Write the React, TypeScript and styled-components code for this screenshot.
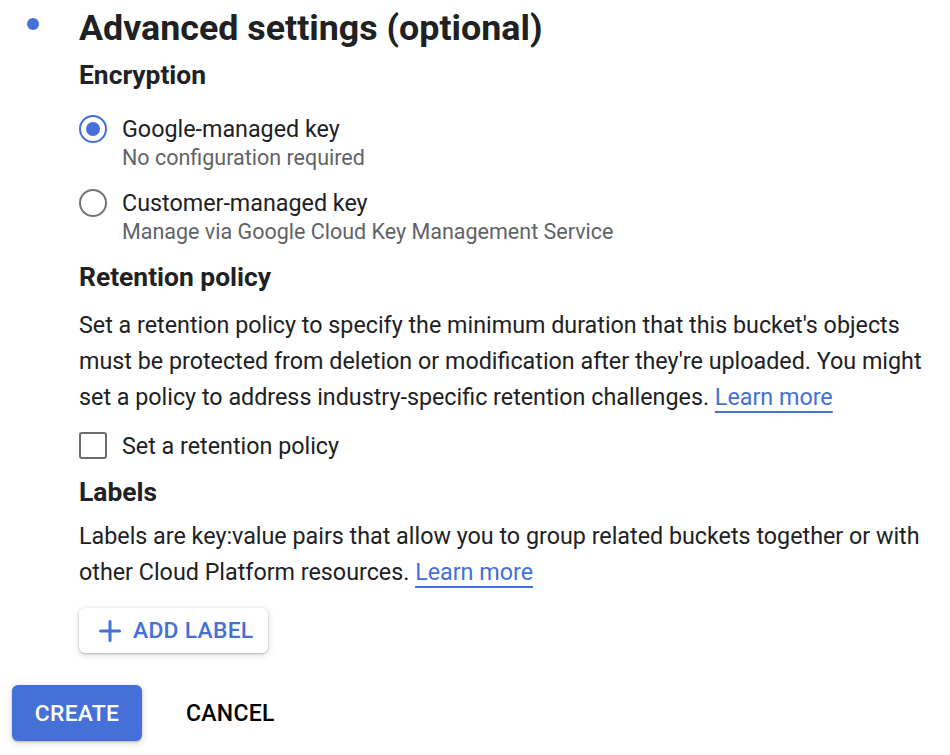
import React from "react";
import styled, { createGlobalStyle } from "styled-components";

const BLUE = "#4470d8";
const TEXT = "#202124";
const MUTED = "#5f6368";

const Global = createGlobalStyle`
  html, body { margin: 0; padding: 0; background: #ffffff; }
  body { font-family: Roboto, "Noto Sans", "Liberation Sans", sans-serif; color: ${TEXT}; }
  * { box-sizing: border-box; }
`;

const Page = styled.div`
  width: 950px;
  height: 755px;
  padding: 7px 0 0 12px;
  overflow: hidden;
`;

const Step = styled.section`
  display: flex;
`;

const Rail = styled.div`
  width: 67px;
  flex: none;
  padding: 11px 0 0 15px;
`;

const Dot = styled.span`
  display: block;
  width: 12px;
  height: 12px;
  border-radius: 50%;
  background: ${BLUE};
`;

const Content = styled.div`
  display: flex;
  flex-direction: column;
  flex: 1;
`;

const Title = styled.h1`
  margin: 0;
  font-size: 35.8px;
  line-height: 42px;
  font-weight: 700;
`;

const Heading = styled.h2<{ $gap: number }>`
  margin: ${(p) => p.$gap}px 0 0;
  font-size: 26.4px;
  line-height: 32px;
  font-weight: 700;
`;

const OptionList = styled.div`
  display: flex;
  flex-direction: column;
  gap: 16px;
  margin-top: 23px;
`;

const Option = styled.label`
  display: flex;
  align-items: flex-start;
  gap: 15px;
`;

const Radio = styled.span<{ $checked?: boolean }>`
  width: 28px;
  height: 28px;
  flex: none;
  border-radius: 50%;
  border: 2px solid ${(p) => (p.$checked ? BLUE : "#757575")};
  display: flex;
  align-items: center;
  justify-content: center;
  margin-top: 1px;
  &::after {
    content: "";
    width: 14px;
    height: 14px;
    border-radius: 50%;
    background: ${(p) => (p.$checked ? BLUE : "transparent")};
  }
`;

const OptionText = styled.div`
  display: flex;
  flex-direction: column;
`;

const OptionLabel = styled.span`
  font-size: 23.3px;
  line-height: 30px;
`;

const OptionHint = styled.span`
  font-size: 21.5px;
  line-height: 28px;
  color: ${MUTED};
`;

const Paragraph = styled.p<{ $gap: number }>`
  margin: ${(p) => p.$gap}px 0 0;
  font-size: 23.3px;
  line-height: 36px;
  width: 856px;
`;

const Link = styled.a`
  color: ${BLUE};
  text-decoration: underline;
  text-decoration-thickness: 2px;
  text-underline-offset: 6px;
`;

const CheckRow = styled.label`
  display: flex;
  align-items: flex-start;
  gap: 15px;
  margin-top: 16px;
  font-size: 23.3px;
  line-height: 30px;
`;

const Checkbox = styled.span`
  width: 28px;
  height: 27px;
  flex: none;
  margin-top: 1px;
  border: 2px solid #6b6b6b;
  border-radius: 3px;
`;

const RaisedButton = styled.button<{ $primary?: boolean }>`
  display: inline-flex;
  align-items: center;
  justify-content: center;
  gap: 12px;
  border: none;
  border-radius: 6px;
  font-family: Roboto, "Liberation Sans", sans-serif;
  font-size: 22.8px;
  font-weight: 500;
  letter-spacing: 0.3px;
  cursor: pointer;
  background: ${(p) => (p.$primary ? BLUE : "#ffffff")};
  color: ${(p) => (p.$primary ? "#ffffff" : BLUE)};
  box-shadow: 0 1px 2px rgba(60, 64, 67, 0.3), 0 2px 6px 1px rgba(60, 64, 67, 0.15);
`;

const AddButton = styled(RaisedButton)`
  align-self: flex-start;
  margin-top: 18px;
  height: 45px;
  padding: 0 15px 0 20px;
`;

const Actions = styled.div`
  display: flex;
  align-items: center;
  gap: 19px;
  margin-top: 32px;
`;

const CreateButton = styled(RaisedButton)`
  height: 56px;
  width: 130px;
`;

const FlatButton = styled.button`
  height: 56px;
  padding: 0 25px;
  border: none;
  background: transparent;
  font-family: Roboto, "Liberation Sans", sans-serif;
  font-size: 23px;
  font-weight: 500;
  letter-spacing: 0.3px;
  color: #000000;
  cursor: pointer;
`;

const PlusIcon = () => (
  <svg width="22" height="22" viewBox="0 0 22 22" aria-hidden="true">
    <path d="M11 1.5v19M1.5 11h19" stroke={BLUE} strokeWidth="3" strokeLinecap="round" fill="none" />
  </svg>
);

export default function App() {
  return (
    <>
      <Global />
      <Page>
        <Step>
          <Rail>
            <Dot />
          </Rail>
          <Content>
            <Title>Advanced settings (optional)</Title>
            <Heading $gap={10}>Encryption</Heading>
            <OptionList>
              <Option>
                <Radio $checked />
                <OptionText>
                  <OptionLabel>Google-managed key</OptionLabel>
                  <OptionHint>No configuration required</OptionHint>
                </OptionText>
              </Option>
              <Option>
                <Radio />
                <OptionText>
                  <OptionLabel>Customer-managed key</OptionLabel>
                  <OptionHint>Manage via Google Cloud Key Management Service</OptionHint>
                </OptionText>
              </Option>
            </OptionList>
            <Heading $gap={15}>Retention policy</Heading>
            <Paragraph $gap={14}>
              Set a retention policy to specify the minimum duration that this bucket's objects
              must be protected from deletion or modification after they're uploaded. You might
              set a policy to address industry-specific retention challenges.{" "}
              <Link href="#">Learn more</Link>
            </Paragraph>
            <CheckRow>
              <Checkbox />
              <span>Set a retention policy</span>
            </CheckRow>
            <Heading $gap={15}>Labels</Heading>
            <Paragraph $gap={10}>
              Labels are key:value pairs that allow you to group related buckets together or with
              other Cloud Platform resources. <Link href="#">Learn more</Link>
            </Paragraph>
            <AddButton>
              <PlusIcon />
              ADD LABEL
            </AddButton>
          </Content>
        </Step>
        <Actions>
          <CreateButton $primary>CREATE</CreateButton>
          <FlatButton>CANCEL</FlatButton>
        </Actions>
      </Page>
    </>
  );
}
